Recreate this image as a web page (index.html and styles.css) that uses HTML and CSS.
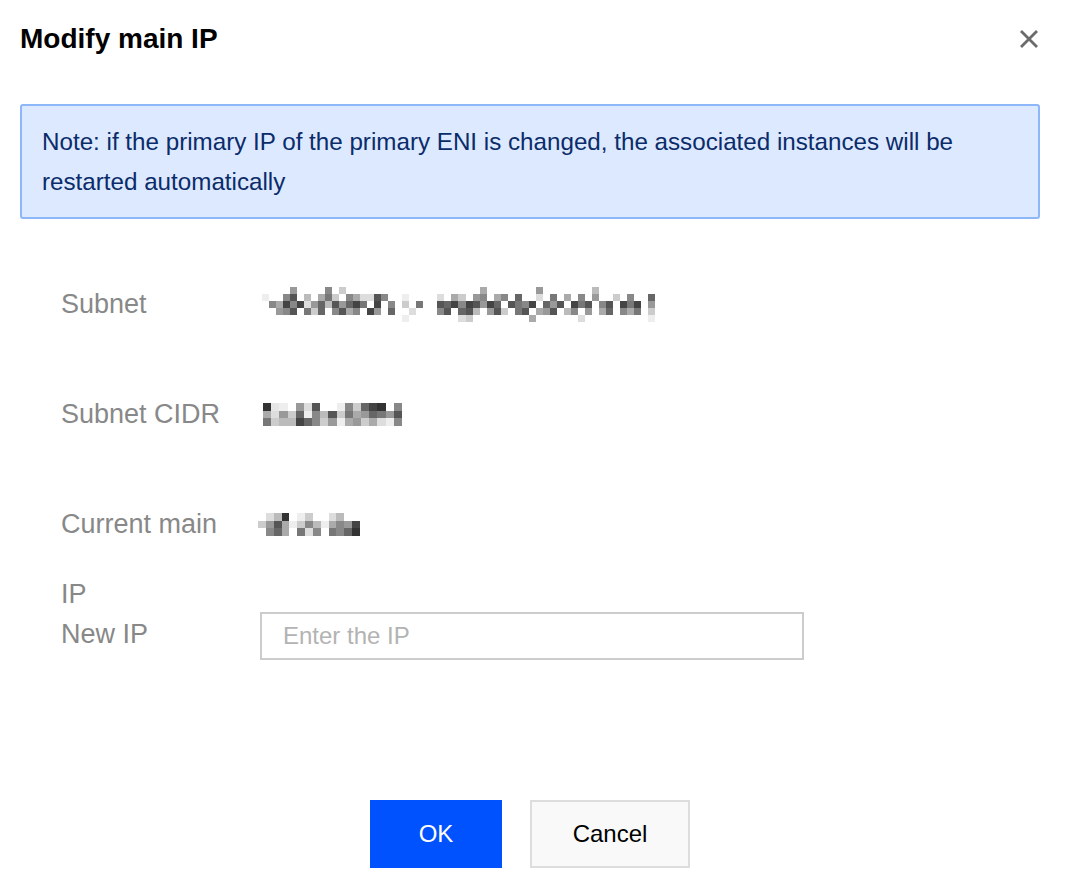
FILE: index.html
```html
<!DOCTYPE html>
<html lang="en">
<head>
<meta charset="utf-8">
<title>Modify main IP</title>
<link rel="stylesheet" href="styles.css">
</head>
<body>
<div class="dialog">
  <div class="header">
    <h2 class="title">Modify main IP</h2>
    <button class="close" type="button" aria-label="Close">
      <svg viewBox="0 0 20 20" width="20" height="20"><path d="M2 2L18 18M18 2L2 18" stroke="#6b6b6b" stroke-width="2.8" fill="none"/></svg>
    </button>
  </div>

  <div class="note">Note: if the primary IP of the primary ENI is changed, the associated instances will be restarted automatically</div>

  <div class="form">
    <div class="row">
      <div class="label">Subnet</div>
      <div class="value">
        <svg class="mosaic mosaic-subnet" viewBox="0 0 57 5" width="400" height="35" preserveAspectRatio="none" shape-rendering="crispEdges">
          <rect x="4" y="0" width="1" height="1" fill="#999"/><rect x="9" y="0" width="1" height="1" fill="#888"/><rect x="11" y="0" width="1" height="1" fill="#ccc"/><rect x="31" y="0" width="1" height="1" fill="#aaa"/><rect x="39" y="0" width="1" height="1" fill="#999"/><rect x="47" y="0" width="1" height="1" fill="#bbb"/>
          <rect x="0" y="1" width="1" height="1" fill="#eee"/><rect x="3" y="1" width="1" height="1" fill="#888"/><rect x="4" y="1" width="1" height="1" fill="#555"/><rect x="6" y="1" width="1" height="1" fill="#bbb"/><rect x="8" y="1" width="1" height="1" fill="#aaa"/><rect x="9" y="1" width="1" height="1" fill="#777"/><rect x="10" y="1" width="1" height="1" fill="#ccc"/><rect x="12" y="1" width="1" height="1" fill="#888"/><rect x="13" y="1" width="1" height="1" fill="#aaa"/><rect x="14" y="1" width="2" height="1" fill="#ddd"/><rect x="16" y="1" width="1" height="1" fill="#555"/><rect x="17" y="1" width="1" height="1" fill="#888"/><rect x="20" y="1" width="1" height="1" fill="#eee"/><rect x="25" y="1" width="1" height="1" fill="#ddd"/><rect x="27" y="1" width="1" height="1" fill="#aaa"/><rect x="28" y="1" width="1" height="1" fill="#ccc"/><rect x="30" y="1" width="1" height="1" fill="#999"/><rect x="31" y="1" width="1" height="1" fill="#888"/><rect x="33" y="1" width="1" height="1" fill="#aaa"/><rect x="34" y="1" width="1" height="1" fill="#888"/><rect x="36" y="1" width="1" height="1" fill="#666"/><rect x="39" y="1" width="1" height="1" fill="#ddd"/><rect x="41" y="1" width="1" height="1" fill="#777"/><rect x="43" y="1" width="1" height="1" fill="#aaa"/><rect x="45" y="1" width="1" height="1" fill="#888"/><rect x="47" y="1" width="1" height="1" fill="#999"/><rect x="50" y="1" width="1" height="1" fill="#ccc"/><rect x="52" y="1" width="1" height="1" fill="#888"/><rect x="55" y="1" width="1" height="1" fill="#666"/>
          <rect x="1" y="2" width="1" height="1" fill="#888"/><rect x="2" y="2" width="1" height="1" fill="#aaa"/><rect x="3" y="2" width="1" height="1" fill="#444"/><rect x="4" y="2" width="1" height="1" fill="#888"/><rect x="5" y="2" width="1" height="1" fill="#444"/><rect x="6" y="2" width="1" height="1" fill="#ddd"/><rect x="7" y="2" width="1" height="1" fill="#999"/><rect x="8" y="2" width="1" height="1" fill="#666"/><rect x="9" y="2" width="1" height="1" fill="#bbb"/><rect x="10" y="2" width="1" height="1" fill="#555"/><rect x="11" y="2" width="1" height="1" fill="#999"/><rect x="12" y="2" width="1" height="1" fill="#666"/><rect x="13" y="2" width="1" height="1" fill="#444"/><rect x="14" y="2" width="1" height="1" fill="#777"/><rect x="16" y="2" width="1" height="1" fill="#444"/><rect x="18" y="2" width="1" height="1" fill="#888"/><rect x="20" y="2" width="1" height="1" fill="#ccc"/><rect x="22" y="2" width="1" height="1" fill="#777"/><rect x="25" y="2" width="1" height="1" fill="#555"/><rect x="26" y="2" width="1" height="1" fill="#666"/><rect x="27" y="2" width="1" height="1" fill="#444"/><rect x="28" y="2" width="1" height="1" fill="#888"/><rect x="29" y="2" width="1" height="1" fill="#444"/><rect x="30" y="2" width="1" height="1" fill="#555"/><rect x="31" y="2" width="1" height="1" fill="#999"/><rect x="32" y="2" width="1" height="1" fill="#444"/><rect x="33" y="2" width="1" height="1" fill="#666"/><rect x="35" y="2" width="1" height="1" fill="#555"/><rect x="36" y="2" width="1" height="1" fill="#777"/><rect x="37" y="2" width="1" height="1" fill="#888"/><rect x="38" y="2" width="1" height="1" fill="#444"/><rect x="40" y="2" width="1" height="1" fill="#666"/><rect x="41" y="2" width="1" height="1" fill="#999"/><rect x="42" y="2" width="1" height="1" fill="#555"/><rect x="44" y="2" width="1" height="1" fill="#444"/><rect x="45" y="2" width="1" height="1" fill="#777"/><rect x="46" y="2" width="1" height="1" fill="#555"/><rect x="48" y="2" width="1" height="1" fill="#888"/><rect x="49" y="2" width="1" height="1" fill="#555"/><rect x="51" y="2" width="1" height="1" fill="#444"/><rect x="52" y="2" width="1" height="1" fill="#777"/><rect x="53" y="2" width="1" height="1" fill="#444"/><rect x="55" y="2" width="1" height="1" fill="#999"/>
          <rect x="2" y="3" width="1" height="1" fill="#999"/><rect x="3" y="3" width="1" height="1" fill="#888"/><rect x="4" y="3" width="1" height="1" fill="#555"/><rect x="6" y="3" width="1" height="1" fill="#777"/><rect x="7" y="3" width="1" height="1" fill="#ccc"/><rect x="8" y="3" width="1" height="1" fill="#666"/><rect x="10" y="3" width="1" height="1" fill="#888"/><rect x="11" y="3" width="1" height="1" fill="#555"/><rect x="12" y="3" width="1" height="1" fill="#aaa"/><rect x="13" y="3" width="1" height="1" fill="#888"/><rect x="15" y="3" width="1" height="1" fill="#444"/><rect x="16" y="3" width="1" height="1" fill="#999"/><rect x="18" y="3" width="1" height="1" fill="#666"/><rect x="21" y="3" width="1" height="1" fill="#ddd"/><rect x="25" y="3" width="1" height="1" fill="#888"/><rect x="26" y="3" width="1" height="1" fill="#555"/><rect x="28" y="3" width="1" height="1" fill="#666"/><rect x="29" y="3" width="1" height="1" fill="#555"/><rect x="30" y="3" width="1" height="1" fill="#bbb"/><rect x="32" y="3" width="1" height="1" fill="#999"/><rect x="33" y="3" width="1" height="1" fill="#555"/><rect x="34" y="3" width="1" height="1" fill="#ccc"/><rect x="36" y="3" width="1" height="1" fill="#777"/><rect x="37" y="3" width="1" height="1" fill="#555"/><rect x="39" y="3" width="1" height="1" fill="#aaa"/><rect x="40" y="3" width="1" height="1" fill="#999"/><rect x="41" y="3" width="1" height="1" fill="#555"/><rect x="43" y="3" width="1" height="1" fill="#bbb"/><rect x="44" y="3" width="1" height="1" fill="#888"/><rect x="46" y="3" width="1" height="1" fill="#999"/><rect x="48" y="3" width="1" height="1" fill="#aaa"/><rect x="49" y="3" width="1" height="1" fill="#666"/><rect x="51" y="3" width="1" height="1" fill="#888"/><rect x="52" y="3" width="1" height="1" fill="#aaa"/><rect x="53" y="3" width="1" height="1" fill="#777"/><rect x="55" y="3" width="1" height="1" fill="#ccc"/>
          <rect x="20" y="4" width="1" height="1" fill="#eee"/><rect x="28" y="4" width="1" height="1" fill="#ddd"/><rect x="29" y="4" width="1" height="1" fill="#ccc"/><rect x="38" y="4" width="1" height="1" fill="#aaa"/><rect x="45" y="4" width="1" height="1" fill="#ddd"/><rect x="55" y="4" width="1" height="1" fill="#eee"/>
        </svg>
      </div>
    </div>

    <div class="row">
      <div class="label">Subnet CIDR</div>
      <div class="value">
        <svg class="mosaic mosaic-cidr" viewBox="0 0 17 3" width="139" height="23" preserveAspectRatio="none" shape-rendering="crispEdges">
          <rect x="0" y="0" width="1" height="1" fill="#333"/><rect x="1" y="0" width="1" height="1" fill="#e6e6e6"/><rect x="2" y="0" width="1" height="1" fill="#eee"/><rect x="4" y="0" width="1" height="1" fill="#999"/><rect x="5" y="0" width="1" height="1" fill="#ddd"/><rect x="6" y="0" width="1" height="1" fill="#555"/><rect x="9" y="0" width="1" height="1" fill="#eee"/><rect x="10" y="0" width="1" height="1" fill="#888"/><rect x="11" y="0" width="1" height="1" fill="#ccc"/><rect x="12" y="0" width="1" height="1" fill="#666"/><rect x="13" y="0" width="1" height="1" fill="#444"/><rect x="14" y="0" width="1" height="1" fill="#333"/><rect x="16" y="0" width="1" height="1" fill="#888"/>
          <rect x="0" y="1" width="1" height="1" fill="#aaa"/><rect x="1" y="1" width="1" height="1" fill="#ddd"/><rect x="2" y="1" width="1" height="1" fill="#999"/><rect x="3" y="1" width="1" height="1" fill="#ccc"/><rect x="4" y="1" width="1" height="1" fill="#666"/><rect x="5" y="1" width="1" height="1" fill="#eee"/><rect x="6" y="1" width="1" height="1" fill="#888"/><rect x="7" y="1" width="1" height="1" fill="#bbb"/><rect x="8" y="1" width="1" height="1" fill="#555"/><rect x="9" y="1" width="1" height="1" fill="#ccc"/><rect x="10" y="1" width="1" height="1" fill="#777"/><rect x="11" y="1" width="1" height="1" fill="#aaa"/><rect x="12" y="1" width="1" height="1" fill="#999"/><rect x="13" y="1" width="1" height="1" fill="#666"/><rect x="14" y="1" width="1" height="1" fill="#777"/><rect x="15" y="1" width="1" height="1" fill="#999"/><rect x="16" y="1" width="1" height="1" fill="#555"/>
          <rect x="0" y="2" width="1" height="1" fill="#777"/><rect x="1" y="2" width="1" height="1" fill="#ccc"/><rect x="2" y="2" width="2" height="1" fill="#bbb"/><rect x="4" y="2" width="1" height="1" fill="#444"/><rect x="5" y="2" width="1" height="1" fill="#666"/><rect x="6" y="2" width="1" height="1" fill="#888"/><rect x="7" y="2" width="1" height="1" fill="#ccc"/><rect x="8" y="2" width="1" height="1" fill="#999"/><rect x="9" y="2" width="1" height="1" fill="#eee"/><rect x="10" y="2" width="1" height="1" fill="#aaa"/><rect x="11" y="2" width="1" height="1" fill="#999"/><rect x="12" y="2" width="1" height="1" fill="#ccc"/><rect x="13" y="2" width="1" height="1" fill="#aaa"/><rect x="14" y="2" width="1" height="1" fill="#ddd"/><rect x="15" y="2" width="1" height="1" fill="#eee"/><rect x="16" y="2" width="1" height="1" fill="#888"/>
        </svg>
      </div>
    </div>

    <div class="row">
      <div class="label label-wrap">Current main IP</div>
      <div class="value">
        <svg class="mosaic mosaic-ip" viewBox="0 0 13 3" width="102" height="23" preserveAspectRatio="none" shape-rendering="crispEdges">
          <rect x="1" y="0" width="1" height="1" fill="#ddd"/><rect x="2" y="0" width="1" height="1" fill="#bbb"/><rect x="3" y="0" width="1" height="1" fill="#333"/><rect x="5" y="0" width="1" height="1" fill="#eee"/><rect x="6" y="0" width="1" height="1" fill="#ccc"/><rect x="9" y="0" width="1" height="1" fill="#ddd"/><rect x="10" y="0" width="1" height="1" fill="#bbb"/>
          <rect x="0" y="1" width="1" height="1" fill="#ccc"/><rect x="1" y="1" width="1" height="1" fill="#999"/><rect x="2" y="1" width="1" height="1" fill="#555"/><rect x="3" y="1" width="1" height="1" fill="#aaa"/><rect x="4" y="1" width="1" height="1" fill="#eee"/><rect x="5" y="1" width="1" height="1" fill="#ccc"/><rect x="6" y="1" width="1" height="1" fill="#888"/><rect x="7" y="1" width="1" height="1" fill="#bbb"/><rect x="8" y="1" width="1" height="1" fill="#eee"/><rect x="9" y="1" width="1" height="1" fill="#aaa"/><rect x="10" y="1" width="1" height="1" fill="#888"/><rect x="11" y="1" width="1" height="1" fill="#999"/><rect x="12" y="1" width="1" height="1" fill="#444"/>
          <rect x="1" y="2" width="1" height="1" fill="#888"/><rect x="2" y="2" width="1" height="1" fill="#666"/><rect x="3" y="2" width="1" height="1" fill="#aaa"/><rect x="5" y="2" width="1" height="1" fill="#777"/><rect x="6" y="2" width="1" height="1" fill="#ddd"/><rect x="7" y="2" width="1" height="1" fill="#888"/><rect x="9" y="2" width="1" height="1" fill="#777"/><rect x="10" y="2" width="1" height="1" fill="#888"/><rect x="11" y="2" width="1" height="1" fill="#666"/><rect x="12" y="2" width="1" height="1" fill="#333"/>
        </svg>
      </div>
    </div>

    <div class="row">
      <div class="label">New IP</div>
      <div class="value">
        <input class="ip-input" type="text" placeholder="Enter the IP">
      </div>
    </div>
  </div>

  <div class="footer">
    <button class="btn btn-primary" type="button">OK</button>
    <button class="btn btn-default" type="button">Cancel</button>
  </div>
</div>
</body>
</html>
```

FILE: styles.css
```css
html, body {
  margin: 0;
  padding: 0;
  background: #ffffff;
}

body {
  font-family: "Liberation Sans", Arial, Helvetica, sans-serif;
  color: #000;
}

.dialog {
  width: 1060px;
  box-sizing: border-box;
  padding: 19px 20px 0;
}

.header {
  display: flex;
  justify-content: space-between;
  align-items: center;
  height: 40px;
}

.title {
  margin: 0;
  font-size: 28px;
  line-height: 40px;
  font-weight: 700;
  color: #000;
}

.close {
  width: 20px;
  height: 20px;
  padding: 0;
  margin-right: 1px;
  border: 0;
  background: none;
  cursor: pointer;
}

.close svg {
  display: block;
}

.note {
  margin-top: 45px;
  border: 2px solid #8db7f9;
  border-radius: 3px;
  background: #dde9fe;
  padding: 16px 20px 15px;
  font-size: 24.2px;
  line-height: 40px;
  color: #0b2c6b;
}

.form {
  margin-top: 61px;
  padding-left: 41px;
  display: flex;
  flex-direction: column;
  gap: 62px;
}

.row {
  display: flex;
  align-items: center;
  height: 48px;
}

.label {
  flex: none;
  width: 199px;
  box-sizing: border-box;
  padding-right: 26px;
  font-size: 27px;
  line-height: 48px;
  color: #888;
}

.label-wrap {
  align-self: flex-start;
  line-height: 70px;
  margin-top: -11px;
}

.value {
  display: flex;
  align-items: center;
}

.mosaic {
  display: block;
}

.mosaic-subnet {
  margin-left: 2px;
}

.mosaic-cidr {
  margin-left: 3px;
}

.mosaic-ip {
  margin-left: -2px;
}

.ip-input {
  width: 544px;
  height: 48px;
  margin-top: 4px;
  box-sizing: border-box;
  border: 2px solid #cccccc;
  border-radius: 0;
  padding: 0 21px;
  font-family: inherit;
  font-size: 24px;
  color: #333;
  background: #fff;
  outline: none;
}

.ip-input::placeholder {
  color: #b3b3b3;
}

.footer {
  margin-top: 142px;
  display: flex;
  justify-content: center;
  gap: 28px;
}

.btn {
  height: 68px;
  box-sizing: border-box;
  font-family: inherit;
  font-size: 24px;
  border-radius: 0;
  cursor: pointer;
}

.btn-primary {
  width: 132px;
  border: 0;
  background: #0052ff;
  color: #fff;
}

.btn-default {
  width: 160px;
  border: 2px solid #dddddd;
  background: #f9f9f9;
  color: #000;
}
```
